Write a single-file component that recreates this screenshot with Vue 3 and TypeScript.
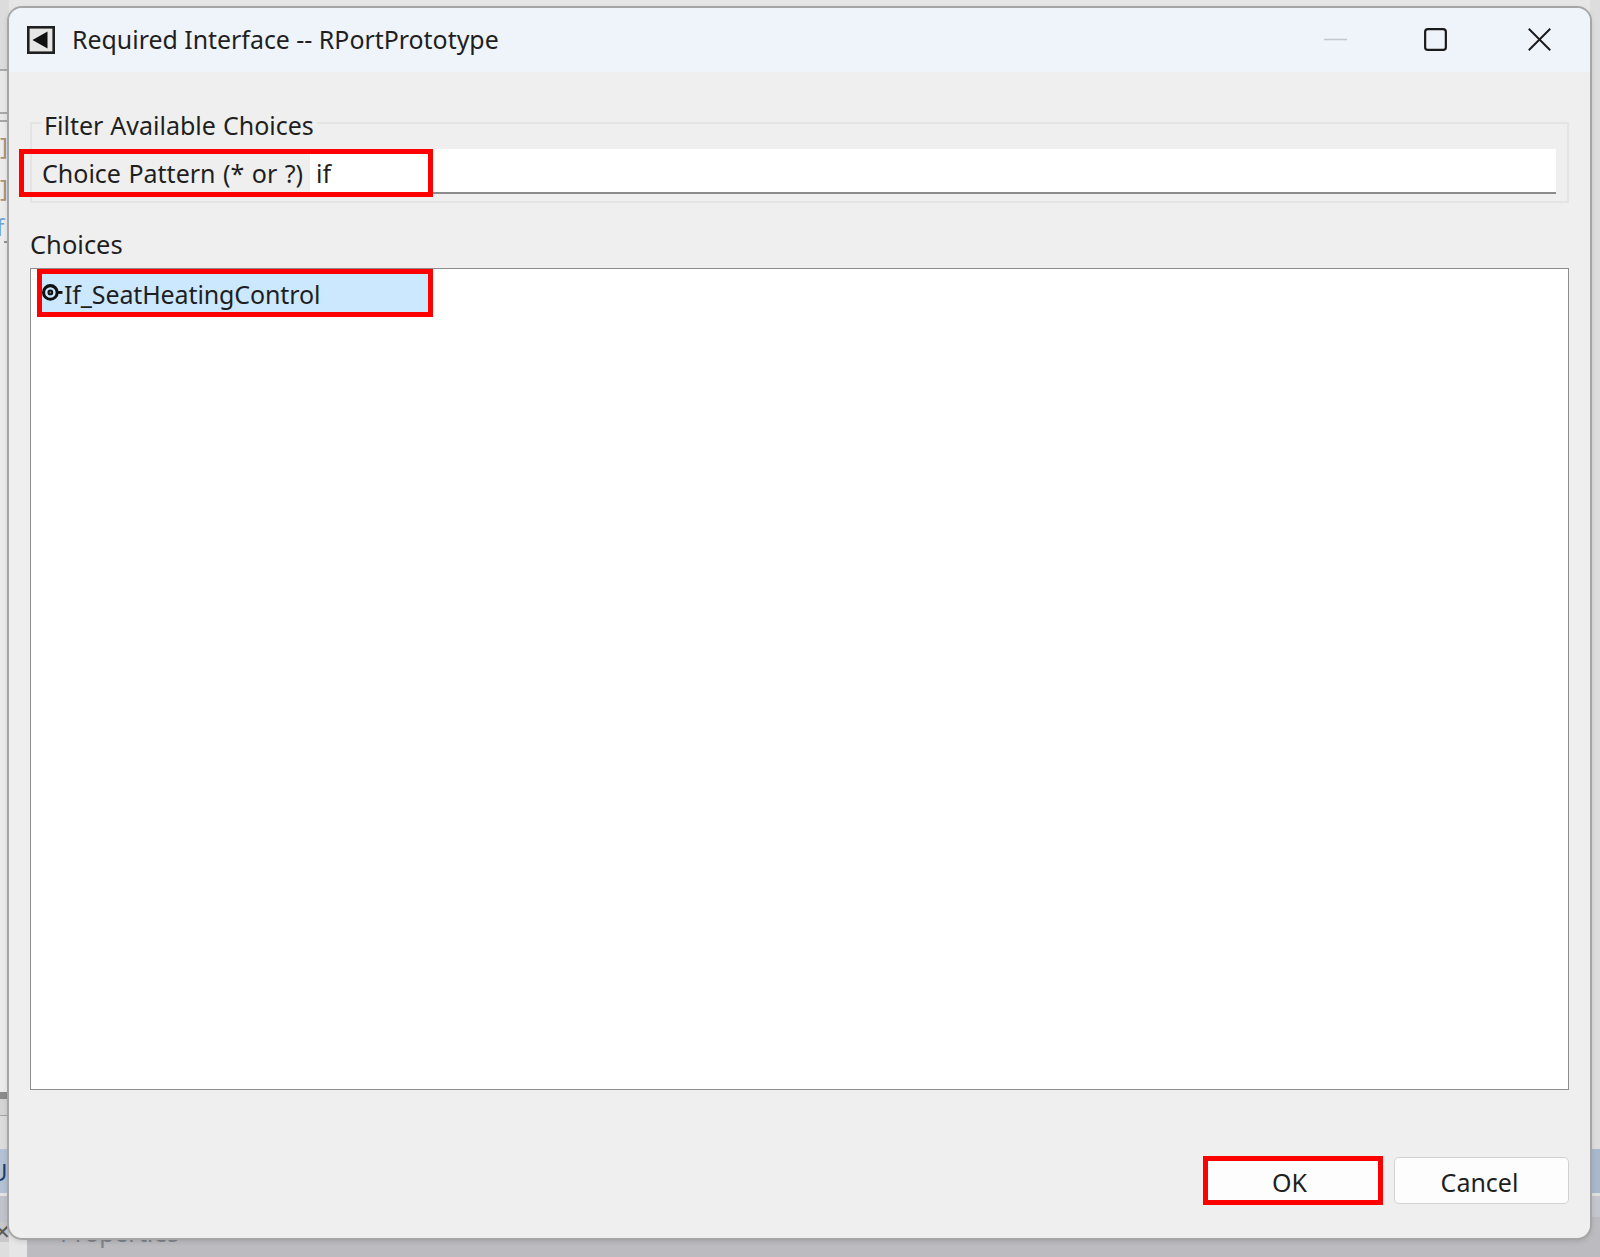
<script setup lang="ts">
const title = 'Required Interface -- RPortPrototype'
const choice = 'If_SeatHeatingControl'
</script>

<template>
  <div class="desk">
    <div class="backdrop-left">
      <div class="sl s1"></div>
      <div class="sl s2"></div>
      <div class="sl s3"></div>
      <div class="sl s4">
        <span class="frag fr1">]</span>
        <span class="frag fr2">]</span>
        <span class="frag fr3">f</span>
        <i class="tick"></i>
      </div>
      <div class="sl s5"></div>
      <div class="sl s6"></div>
      <div class="sl s7"></div>
      <div class="sl s8"><span class="frag fr4">U</span></div>
      <div class="sl s9"></div>
      <div class="sl s10"><span class="frag fr5">✕</span></div>
      <div class="sl s11"></div>
    </div>
    <div class="backdrop-bottom"><span class="tail">Properties</span></div>
    <div class="backdrop-right">
      <div class="sr r1"></div>
      <div class="sr r2"></div>
      <div class="sr r3"></div>
      <div class="sr r4"></div>
    </div>
    <section class="window">
      <header class="titlebar">
        <svg class="app-icon" viewBox="0 0 28 28" aria-hidden="true">
          <rect x="1.3" y="1.3" width="25.4" height="25.4" fill="#e6e6e6" stroke="#1f1f1f" stroke-width="2.6" />
          <path d="M5.5 14 L20.5 5.5 V22.5 Z" fill="#111" />
        </svg>
        <span class="title">{{ title }}</span>
        <div class="controls">
          <svg class="ctl min" viewBox="0 0 24 24" aria-hidden="true"><path d="M0 12H24" stroke="#c4c7cc" stroke-width="1.4" /></svg>
          <svg class="ctl max" viewBox="0 0 24 24" aria-hidden="true"><rect x="1.2" y="1.2" width="21.6" height="21.6" rx="2.8" fill="none" stroke="#1a1a1a" stroke-width="2.3" /></svg>
          <svg class="ctl close" viewBox="0 0 24 24" aria-hidden="true"><path d="M0.8 0.8L23.2 23.2M23.2 0.8L0.8 23.2" stroke="#1a1a1a" stroke-width="2" /></svg>
        </div>
      </header>
      <main class="body">
        <fieldset class="group">
          <legend>Filter Available Choices</legend>
          <div class="pattern">
            <span class="pattern-label">Choice Pattern (* or ?)</span>
            <span class="pattern-input">if</span>
            <span class="mark mark-pattern"></span>
          </div>
        </fieldset>
        <div class="choices-label">Choices</div>
        <div class="list">
          <div class="row">
            <svg class="row-icon" viewBox="0 0 20 20" aria-hidden="true">
              <circle cx="8.5" cy="9.5" r="6.2" fill="none" stroke="#111" stroke-width="2.8" />
              <circle cx="8.5" cy="9.5" r="2.6" fill="#111" />
              <circle cx="8.5" cy="9.5" r="0.8" fill="#888" />
              <path d="M15 9.5H19.5" stroke="#111" stroke-width="2.6" />
            </svg>
            <span class="row-text">{{ choice }}</span>
            <span class="mark mark-row"></span>
          </div>
        </div>
        <footer class="actions">
          <button class="btn btn-ok" type="button"><span>OK</span></button>
          <button class="btn btn-cancel" type="button"><span>Cancel</span></button>
        </footer>
      </main>
    </section>
  </div>
</template>

<style>
html, body { margin: 0; background: #e8e8e8; }
</style>

<style scoped>
.desk {
  position: relative;
  width: 1600px;
  height: 1257px;
  overflow: hidden;
  background: #e6e6e6;
  font-family: "Noto Sans", "Open Sans", sans-serif;
  color: #1f1f1f;
}
.backdrop-left {
  position: absolute;
  left: 0;
  top: 0;
  width: 9px;
  height: 1257px;
  display: flex;
  flex-direction: column;
}
.sl { width: 9px; flex: none; position: relative; overflow: hidden; }
.s1 { height: 69px; background: #dcdcdc; }
.s2 { height: 43px; background: #e8e8e8; border-top: 2px solid #a8a8a8; box-sizing: border-box; }
.s3 { height: 8px; background: #e8e8e8; border-top: 2px solid #a8a8a8; box-sizing: border-box; }
.s4 { height: 972px; background: #ececec; border-top: 2px solid #a8a8a8; box-sizing: border-box; }
.s5 { height: 7px; background: #8c8c8c; }
.s6 { height: 16px; background: #d4d4d4; border-bottom: 1px solid #a4a4a4; }
.s7 { height: 33px; background: #dcdcdc; }
.s8 { height: 44px; background: #b2c1d3; }
.s9 { height: 29px; background: #c1c3cc; border-top: 3px solid #e4e4e4; box-sizing: border-box; }
.s10 { height: 20px; background: #c8c8cb; }
.s11 { flex: 1; background: #dedede; }
.frag { position: absolute; line-height: 1; white-space: nowrap; }
.fr1 { left: 0; top: 12px; font-size: 24px; color: #a99277; }
.fr2 { left: 0; top: 54px; font-size: 24px; color: #a99277; }
.fr3 { left: -4px; top: 93px; font-size: 24px; color: #6fa3d6; }
.fr4 { left: -10px; top: 11px; font-size: 24px; color: #1f3f70; }
.fr5 { left: -6px; top: 0; font-size: 20px; color: #5a5a5a; }
.tick { position: absolute; left: 4px; top: 119px; width: 5px; height: 2px; background: #909090; }
.backdrop-bottom {
  position: absolute;
  left: 27px;
  right: 0;
  bottom: 0;
  height: 40px;
  background: #bbbbc0;
  overflow: hidden;
}
.tail {
  position: absolute;
  left: 33px;
  top: 2px;
  font-size: 24.5px;
  line-height: 28px;
  color: #7f848c;
}
.backdrop-right {
  position: absolute;
  right: 0;
  top: 0;
  width: 10px;
  height: 1217px;
  display: flex;
  flex-direction: column;
}
.sr { flex: none; }
.r1 { height: 1149px; background: #dddddd; }
.r2 { height: 44px; background: #a9b9cc; }
.r3 { height: 3px; background: #dfdfdf; }
.r4 { height: 21px; background: #c4c5cd; }
.window {
  position: absolute;
  left: 9px;
  top: 8px;
  width: 1581px;
  height: 1230px;
  display: flex;
  flex-direction: column;
  box-sizing: border-box;
  border-radius: 13px;
  overflow: hidden;
  background: #efefef;
  box-shadow: 0 0 0 2px #a6a6a6, 0 2px 6px rgba(0, 0, 0, 0.2);
}
.titlebar {
  height: 64px;
  flex: none;
  display: flex;
  align-items: center;
  padding-left: 18px;
  background: #eff3fa;
}
.app-icon { width: 28px; height: 28px; flex: none; margin-top: -1px; }
.title {
  margin-left: 17px;
  font-size: 24.9px;
  line-height: 34px;
  margin-top: -2px;
  white-space: nowrap;
}
.controls {
  margin-left: auto;
  display: flex;
  align-items: center;
  padding-right: 39px;
  margin-top: -2px;
}
.ctl { width: 23px; height: 23px; flex: none; }
.min { margin-right: 77px; }
.max { margin-right: 81px; }
.body {
  flex: 1;
  position: relative;
  display: flex;
  flex-direction: column;
  padding: 50px 21px 33px;
  min-height: 0;
}
.group {
  margin: 0;
  padding: 0 11px 9px 11px;
  height: 81px;
  box-sizing: border-box;
  border: 2px solid #e4e4e4;
  position: relative;
}
legend {
  position: absolute;
  left: 9px;
  top: -17px;
  padding: 0 3px;
  background: #efefef;
  font-size: 25px;
  word-spacing: 0.5px;
  line-height: 36px;
  white-space: nowrap;
}
.pattern {
  position: relative;
  margin-top: 25px;
  height: 45px;
  box-sizing: border-box;
  display: flex;
  align-items: center;
  background: #fff;
  border-bottom: 2px solid #8b8b8b;
  font-size: 25px;
  word-spacing: 1px;
}
.pattern-label {
  width: 268px;
  align-self: stretch;
  flex: none;
  box-sizing: border-box;
  display: flex;
  align-items: center;
  padding: 4px 0 0 0;
  margin-left: -1px;
  background: #efefef;
  white-space: pre;
}
.pattern-input { margin-left: 6px; margin-top: 4px; }
.mark {
  position: absolute;
  box-sizing: border-box;
  border: 5px solid #ff0000;
  pointer-events: none;
}
.mark-pattern {
  left: -24px;
  top: 0;
  width: 414px;
  height: 48px;
}
.choices-label {
  margin-top: 18px;
  height: 45px;
  display: flex;
  align-items: center;
  font-size: 25.5px;
  margin-bottom: 2px;
}
.list {
  height: 822px;
  flex: none;
  box-sizing: border-box;
  border: 1.5px solid #8d8d8d;
  background: #fff;
  position: relative;
  padding: 4px 0 0 10px;
}
.row {
  position: relative;
  width: 392px;
  height: 42px;
  display: flex;
  align-items: center;
  background: #cce8ff;
  font-size: 25px;
  white-space: nowrap;
}
.row-text { letter-spacing: -0.12px; }
.row-icon { width: 22px; height: 22px; margin-right: 1px; flex: none; margin-top: -3px; }
.mark-row {
  left: -4px;
  top: -4px;
  width: 396px;
  height: 48px;
}
.actions {
  margin-top: auto;
  display: flex;
  justify-content: flex-end;
  gap: 10px;
}
.btn {
  width: 175px;
  height: 47px;
  box-sizing: border-box;
  background: #fdfdfd;
  border: 1.5px solid #d2d2d2;
  border-radius: 5px;
  font: inherit;
  font-size: 25px;
  color: #1f1f1f;
  padding: 3px 0 0;
}
.btn-cancel { padding-right: 4px; }
.btn-ok {
  border: 5px solid #ff0000;
  border-radius: 0;
  width: 180px;
  height: 49px;
  margin-top: -1px;
  padding: 3px 7px 0 0;
  margin-right: 1px;
}
</style>
